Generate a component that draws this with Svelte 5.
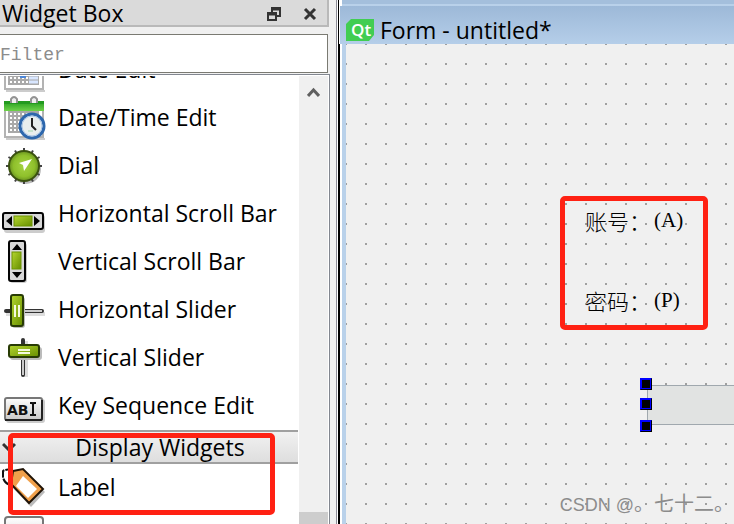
<script>
  const widgets = [
    ['date', 'Date Edit'],
    ['datetime', 'Date/Time Edit'],
    ['dial', 'Dial'],
    ['hscroll', 'Horizontal Scroll Bar'],
    ['vscroll', 'Vertical Scroll Bar'],
    ['hslider', 'Horizontal Slider'],
    ['vslider', 'Vertical Slider'],
    ['keys', 'Key Sequence Edit'],
  ];
  const ticks = Array.from({ length: 12 }, (_, i) => i * 30);
  const display = [['label', 'Label'], ['browser', '']];
</script>

{#snippet calendar()}
  <path d="M6 44H45V46H6Z" fill="#ccc" />
  <rect x="5" y="9" width="38" height="34" fill="#fff" stroke="#b3b3b3" stroke-width="2" />
  <rect x="8" y="17" width="31" height="22" fill="#a9a9a9" />
  <path d="M10 20H38M10 24H38M10 28H38M10 32H38M10 36H38" stroke="#fff" stroke-width="2" stroke-dasharray="2 2" />
  <rect x="4" y="7" width="40" height="10" fill="url(#green)" />
  <rect x="4" y="7" width="40" height="3" fill="#239a20" />
  <path d="M11 9V5Q14 1 17 5V9M31 9V5Q34 1 37 5V9" fill="#eee" stroke="#939393" stroke-width="2" />
{/snippet}

{#snippet icon(kind)}
  <svg class="icon" viewBox="0 0 48 48" aria-hidden="true">
    {#if kind === 'date'}
      {@render calendar()}
      <path d="M20 30H26V32H20Z" fill="#4c86d8" />
      <path d="M29 32H38M29 36H38" stroke="#d8e6ff" stroke-width="3" />
    {:else if kind === 'datetime'}
      {@render calendar()}
      <circle cx="32" cy="32" r="12" fill="#e9eeee" stroke="#2d67ad" stroke-width="3" />
      <circle cx="32" cy="32" r="10" fill="none" stroke="#a8c4e6" />
      <path d="M32 24V32L36 36" fill="none" stroke="#222" stroke-width="2" />
      <path d="M28 37H33" stroke="#a5d8b0" />
    {:else if kind === 'dial'}
      <circle cx="26" cy="27" r="15" fill="#bbb" />
      {#each ticks as angle}
        <path d="M24 6V12" stroke="#444" stroke-width="2" transform="rotate({angle} 24 24)" />
      {/each}
      <circle cx="24" cy="24" r="15" fill="url(#dial)" stroke="#3b520f" stroke-width="2" />
      <path d="M32 17L19 21L23 23L24 29Z" fill="#fff" />
    {:else if kind === 'hscroll'}
      <rect x="4" y="25" width="41" height="18" rx="3" fill="#ccc" />
      <rect x="3" y="23" width="40" height="16" rx="2" fill="#d8d8d8" stroke="#050505" stroke-width="2" />
      <path d="M12 26V36L6 31ZM34 26V36L40 31Z" fill="#000" />
      <rect x="14" y="26" width="18" height="10" fill="url(#olive)" stroke="#6d9400" />
    {:else if kind === 'vscroll'}
      <rect x="10" y="5" width="17" height="40" rx="3" fill="#ccc" />
      <rect x="9" y="3" width="16" height="40" rx="2" fill="#d8d8d8" stroke="#050505" stroke-width="2" />
      <path d="M12 12H22L17 6ZM12 34H22L17 40Z" fill="#000" />
      <rect x="12" y="14" width="9" height="17" fill="url(#olive)" stroke="#6d9400" />
    {:else if kind === 'hslider'}
      <path d="M6 28H45" stroke="#ddd" stroke-width="4" />
      <path d="M6 25H42" stroke="#333" stroke-width="4" stroke-linecap="round" />
      <path d="M24 25H42" stroke="#ccc" stroke-width="2" />
      <rect x="12" y="11" width="13" height="31" rx="3" fill="#bbb" />
      <rect x="11" y="9" width="12" height="31" rx="2" fill="url(#olive)" stroke="#283b04" stroke-width="2" />
      <path d="M15 19V31M19 19V31" stroke="#f4f9df" stroke-width="2" />
    {:else if kind === 'vslider'}
      <path d="M26 7V43" stroke="#ddd" stroke-width="4" />
      <path d="M23 6V41" stroke="#333" stroke-width="4" stroke-linecap="round" />
      <path d="M23 25V41" stroke="#ccc" stroke-width="2" />
      <rect x="10" y="13" width="32" height="13" rx="3" fill="#bbb" />
      <rect x="9" y="11" width="30" height="12" rx="2" fill="url(#olive)" stroke="#283b04" stroke-width="2" />
      <path d="M18 16H30M18 19H30" stroke="#f4f9df" stroke-width="2" />
    {:else if kind === 'keys'}
      <rect x="6" y="17" width="39" height="24" rx="3" fill="#ccc" />
      <rect x="5" y="16" width="37" height="22" rx="2" fill="url(#silver)" stroke="#777" stroke-width="2" />
      <path d="M5 38H41Q42 38 42 36V18" fill="none" stroke="#222" stroke-width="2" />
      <text x="7" y="33" class="glyphs">AB</text>
      <path d="M30 21H32L33 22L34 21H36M33 22V32M30 33H32L33 32L34 33H36" fill="none" stroke="#111" stroke-width="2" />
    {:else if kind === 'label'}
      <path d="M13 7Q8 4 3 7V13Q4 19 10 21" fill="none" stroke="#111" stroke-width="2" stroke-dasharray="8 1" />
      <path d="M15 12L25 8L45 28L31 43L13 24Z" fill="#bbb" />
      <path d="M13 7L23 5L43 25L29 39L11 20Z" fill="#f0a04b" stroke="#211407" stroke-width="2" />
      <path d="M23 12L37 25L28 34L16 22Z" fill="#fff" />
    {:else}
      <rect x="5" y="5" width="38" height="34" rx="3" fill="url(#silver)" stroke="#777" stroke-width="2" />
    {/if}
  </svg>
{/snippet}

<svg class="defs" aria-hidden="true">
  <defs>
    <linearGradient id="green" x2="0" y2="1"><stop stop-color="#219c1c" /><stop offset="1" stop-color="#6fd24a" /></linearGradient>
    <linearGradient id="olive" x2="1" y2="1"><stop stop-color="#b4d62f" /><stop offset="1" stop-color="#678e00" /></linearGradient>
    <linearGradient id="silver" x2="0" y2="1"><stop stop-color="#fff" /><stop offset="1" stop-color="#c8c8c8" /></linearGradient>
    <radialGradient id="dial"><stop stop-color="#a6d444" /><stop offset=".7" stop-color="#8fc02b" /><stop offset="1" stop-color="#6a9420" /></radialGradient>
  </defs>
</svg>

<main>
  <aside>
    <header class="dock">
      <h1>Widget Box</h1>
      <button aria-label="Float">
        <svg width="14" height="14" viewBox="0 0 14 14"><path d="M5 5V1H13V9H9M1 6H9V13H1Z" fill="none" stroke="#333" stroke-width="2" /><path d="M4 2H13M1 7H9" stroke="#333" stroke-width="3" /></svg>
      </button>
      <button aria-label="Close">
        <svg width="14" height="14" viewBox="0 0 14 14"><path d="M2 2L12 12M12 2L2 12" stroke="#333" stroke-width="3" /></svg>
      </button>
    </header>
    <input class="filter" aria-label="Filter" placeholder="Filter" />
    <div class="list">
      <div class="items">
        <ul class="scrolled">
          {#each widgets as [kind, name]}
            <li>{@render icon(kind)}<span>{name}</span></li>
          {/each}
        </ul>
        <h2>
          <svg width="14" height="10" viewBox="0 0 14 10"><path d="M1 2L7 8L13 2" fill="none" stroke="#333" stroke-width="3" /></svg>
          <span>Display Widgets</span>
        </h2>
        <ul>
          {#each display as [kind, name]}
            <li>{@render icon(kind)}{#if name}<span>{name}</span>{/if}</li>
          {/each}
        </ul>
      </div>
      <div class="scrollbar">
        <svg width="13" height="11" viewBox="0 0 13 11"><path d="M1 9L6.5 3L12 9" fill="none" stroke="#606060" stroke-width="3" /></svg>
        <div class="thumb"></div>
      </div>
    </div>
    <div class="mark category"></div>
  </aside>

  <section class="window">
    <header class="title">
      <svg width="28" height="22" viewBox="0 0 28 22"><path d="M5 0H28V16L23 22H0V5Z" fill="#41cd52" /><text x="5" y="17" class="qt">Qt</text></svg>
      <h2>Form - untitled*</h2>
    </header>
    <div class="canvas">
      <div class="field account">账号：<span>(A)</span></div>
      <div class="field password">密码：<span>(P)</span></div>
      <div class="mark labels"></div>
      <div class="edit">
        <i class="top"></i><i class="middle"></i><i class="bottom"></i>
      </div>
      <p class="credit"><span>CSDN @</span>。七十二。</p>
    </div>
  </section>
</main>

<style>
  :global(body) { margin: 0; }
  * { box-sizing: border-box; }
  h1, h2, p, ul { margin: 0; padding: 0; font-weight: 400; }
  main {
    display: flex;
    height: 100vh;
    overflow: hidden;
    background: #f0f0f0;
    color: #000;
    font: 23px/32px "Open Sans", "Noto Sans", sans-serif;
  }
  .defs { position: absolute; width: 0; height: 0; }
  aside {
    position: relative;
    display: flex;
    flex-direction: column;
    flex: 0 0 339px;
    border-right: 1px solid #000;
    padding-right: 8px;
    box-shadow: inset -1px 0 #fff, inset -2px 0 #8c8c96;
  }
  .dock {
    display: flex;
    align-items: center;
    gap: 22px;
    height: 27px;
    margin-right: 1px;
    padding: 2px 10px 0 2px;
    border: solid #b9b9b9;
    border-width: 0 2px 2px 0;
    background: #dadada;
  }
  h1 { flex: 1; font-size: 23px; line-height: 23px; }
  button { display: flex; padding: 0; border: 0; background: none; }
  .filter {
    width: 328px;
    height: 39px;
    margin: 7px 0 1px;
    padding: 3px 0 0;
    border: solid #7a7a72;
    border-width: 1px 1px 1px 0;
    border-radius: 0;
    background: #fff;
    font: 18px "Liberation Mono", monospace;
    outline: 0;
  }
  .filter::placeholder { color: #8c8c8c; opacity: 1; }
  .list {
    display: flex;
    flex: 1;
    min-height: 0;
    border: solid #828790;
    border-width: 1px 1px 0 0;
    padding: 1px 1px 0 0;
    background: #fff;
  }
  .items { flex: 1; overflow: hidden; }
  .scrolled { margin-top: -30px; }
  li { display: flex; align-items: center; gap: 10px; height: 48px; white-space: nowrap; }
  li span { padding-bottom: 2px; }
  .icon { width: 48px; height: 48px; flex: none; }
  .glyphs { font: 700 14px "DejaVu Sans", sans-serif; fill: #111; }
  .items h2 {
    display: flex;
    align-items: center;
    height: 34px;
    margin-right: 1px;
    border: solid #a0a0a0;
    border-width: 2px 0;
    background: linear-gradient(#f1f1f1, #dedede);
    font-size: 23px;
  }
  .items h2 svg { margin: 0 6px 0 2px; }
  .items h2 span { flex: 1; text-align: center; }
  .scrollbar {
    display: flex;
    flex-direction: column;
    justify-content: space-between;
    align-items: center;
    width: 29px;
    padding-top: 11px;
    background: #f0f0f0;
  }
  .thumb { width: 100%; height: 12px; background: #cdcdcd; }
  .mark { position: absolute; border: 5px solid #ff2113; border-radius: 5px; }
  .category { left: 8px; top: 433px; width: 267px; height: 82px; }
  .window {
    display: flex;
    flex-direction: column;
    flex: 1;
    min-width: 0;
    padding: 6px 0 0 1px;
    background:
      linear-gradient(#a4bfdc 4px, #b9d1ea 4px) 3px 0 / 100% 6px no-repeat,
      linear-gradient(#fff 44px, #000 44px);
  }
  .title {
    display: flex;
    align-items: center;
    gap: 6px;
    height: 38px;
    padding: 10px 6px 0;
    background: linear-gradient(#9db9d8, #b5cee9);
  }
  .title h2 { font-size: 23px; }
  .qt { font: 600 17px "Open Sans", sans-serif; fill: #fff; }
  .canvas {
    position: relative;
    flex: 1;
    margin-left: 2px;
    border-left: 4px solid #b9d1ea;
    box-shadow: -2px 0 #fff;
    background: conic-gradient(from 90deg at 18px 18px, #a0a0a0 90deg, transparent 0) 1px 1px / 20px 20px #f0f0f0;
  }
  .field {
    position: absolute;
    left: 239px;
    display: flex;
    gap: 3px;
    font: 22px/32px "Noto Sans CJK SC", sans-serif;
    font-weight: 300;
    white-space: nowrap;
  }
  .field span { font: 21px/32px "Liberation Serif", serif; }
  .account { top: 160px; }
  .password { top: 240px; }
  .labels { left: 214px; top: 152px; width: 148px; height: 134px; }
  .edit { position: absolute; left: 301px; right: 0; top: 341px; height: 40px; border: solid #a0a8ae; border-width: 1px 0 1px 1px; background: #e1e3e2; }
  .edit i { position: absolute; left: -8px; width: 12px; height: 12px; border: 1px solid #00f; border-right-color: #000; border-bottom-color: #000; background: #000; box-shadow: inset 0 0 0 1px #00f; }
  .top { top: -8px; }
  .middle { top: 12px; }
  .bottom { bottom: -8px; }
  .credit { position: absolute; right: 0; bottom: 3px; color: #8c8c8c; font: 20px/32px "Liberation Sans", "Noto Sans CJK SC", sans-serif; white-space: nowrap; }
  .credit span { font-size: 18px; }
</style>
